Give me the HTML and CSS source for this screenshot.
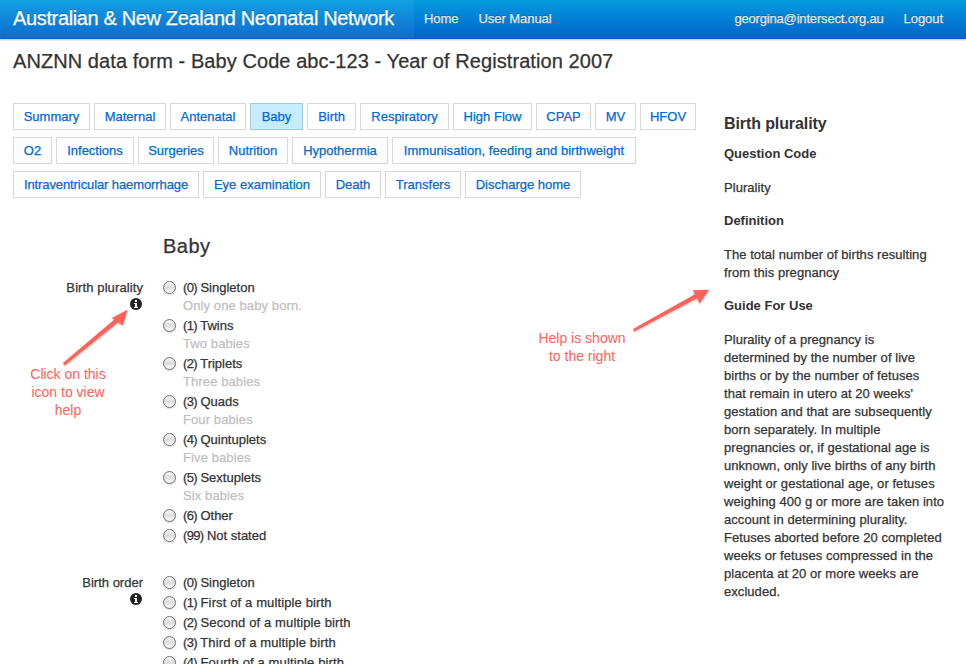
FILE: index.html
```
<!DOCTYPE html>
<html lang="en">
<head>
<meta charset="utf-8">
<title>ANZNN data form</title>
<link rel="stylesheet" href="styles.css">
</head>
<body>
<header class="navbar">
  <a class="brand">Australian &amp; New Zealand Neonatal Network</a>
  <nav class="nav"><a>Home</a><a>User Manual</a></nav>
  <nav class="nav nav-right"><a class="email">georgina@intersect.org.au</a><a>Logout</a></nav>
</header>
<h1 class="page-title">ANZNN data form - Baby Code abc-123 - Year of Registration 2007</h1>
<div class="columns">
  <main class="main">
    <div class="tabs">
      <div class="tab-row"><a style="width:77px">Summary</a><a style="width:72px">Maternal</a><a style="width:76px">Antenatal</a><a class="active" style="width:53px">Baby</a><a style="width:49px">Birth</a><a style="width:89px">Respiratory</a><a style="width:79px">High Flow</a><a style="width:55px">CPAP</a><a style="width:41px">MV</a><a style="width:56px">HFOV</a></div>
      <div class="tab-row"><a style="width:39px">O2</a><a style="width:78px">Infections</a><a style="width:76px">Surgeries</a><a style="width:70px">Nutrition</a><a style="width:96px">Hypothermia</a><a class="wide" style="width:244px">Immunisation, feeding and birthweight</a></div>
      <div class="tab-row"><a class="narrow" style="width:186px">Intraventricular haemorrhage</a><a style="width:118px">Eye examination</a><a style="width:56px">Death</a><a style="width:76px">Transfers</a><a style="width:116px">Discharge home</a></div>
    </div>
    <h2 class="section-title">Baby</h2>
    <section class="question">
      <div class="label"><span class="plurality">Birth plurality</span>
        <svg class="info" viewBox="0 0 12 12"><circle cx="6" cy="6" r="6"/><path d="M5 2h2v2H5zM4 5h3v4h1v1H4V9h1V6H4z"/></svg>
      </div>
      <div class="options">
        <label class="option"><i class="radio"></i><span><b>(0)</b> Singleton</span><small>Only one baby born.</small></label>
        <label class="option"><i class="radio"></i><span><b>(1)</b> Twins</span><small>Two babies</small></label>
        <label class="option"><i class="radio"></i><span><b>(2)</b> Triplets</span><small>Three babies</small></label>
        <label class="option"><i class="radio"></i><span><b>(3)</b> Quads</span><small>Four babies</small></label>
        <label class="option"><i class="radio"></i><span><b>(4)</b> Quintuplets</span><small>Five babies</small></label>
        <label class="option"><i class="radio"></i><span><b>(5)</b> Sextuplets</span><small>Six babies</small></label>
        <label class="option"><i class="radio"></i><span><b>(6)</b> Other</span></label>
        <label class="option"><i class="radio"></i><span><b>(99)</b> Not stated</span></label>
      </div>
    </section>
    <section class="question order">
      <div class="label"><span>Birth order</span>
        <svg class="info" viewBox="0 0 12 12"><circle cx="6" cy="6" r="6"/><path d="M5 2h2v2H5zM4 5h3v4h1v1H4V9h1V6H4z"/></svg>
      </div>
      <div class="options">
        <label class="option"><i class="radio"></i><span><b>(0)</b> Singleton</span></label>
        <label class="option"><i class="radio"></i><span><b>(1)</b> First of a multiple birth</span></label>
        <label class="option"><i class="radio"></i><span><b>(2)</b> Second of a multiple birth</span></label>
        <label class="option"><i class="radio"></i><span><b>(3)</b> Third of a multiple birth</span></label>
        <label class="option"><i class="radio"></i><span><b>(4)</b> Fourth of a multiple birth</span></label>
      </div>
    </section>
  </main>
  <aside class="help">
    <h3>Birth plurality</h3>
    <h4>Question Code</h4>
    <p>Plurality</p>
    <h4>Definition</h4>
    <p>The total number of births resulting<br>from this pregnancy</p>
    <h4>Guide For Use</h4>
    <p>Plurality of a pregnancy is<br>determined by the number of live<br>births or by the number of fetuses<br>that remain in utero at 20 weeks'<br>gestation and that are subsequently<br>born separately. In multiple<br>pregnancies or, if gestational age is<br>unknown, only live births of any birth<br>weight or gestational age, or fetuses<br>weighing 400 g or more are taken into<br>account in determining plurality.<br>Fetuses aborted before 20 completed<br>weeks or fetuses compressed in the<br>placenta at 20 or more weeks are<br>excluded.</p>
  </aside>
</div>
<svg class="arrows" viewBox="0 0 966 664">
  <g class="arrow"><path d="M63 363 115.5 318.5 118.5 322 64.8 365.5z"/><path d="M127.5 309.8 111.8 318 122.8 325.5z"/></g>
  <g class="arrow"><path d="M633 329 695.5 294 697.5 298 634.2 331.5z"/><path d="M709 289.8 692.8 290.3 699.8 303.5z"/></g>
</svg>
<div class="note note-icon">Click on this<br>icon to view<br>help</div>
<div class="note note-help">Help is shown<br>to the right</div>
</body>
</html>
```
FILE: styles.css
```
* { box-sizing: border-box; }
body {
  position: relative;
  margin: 0;
  height: 664px;
  overflow: hidden;
  background: #fff;
  color: #333;
  font: 13px/18px "Liberation Sans", Arial, sans-serif;
  -webkit-text-stroke: .25px currentColor;
}
h1, h2, h3, h4, p { margin: 0; }
.navbar {
  display: flex;
  height: 39px;
  color: #e6e6e6;
  background: linear-gradient(#059be0, #0063cd);
  border-bottom: 1px solid #0058b5;
  box-shadow: 0 1px 2px rgba(0, 0, 0, .25);
  text-shadow: 0 -1px 0 rgba(0, 0, 0, .25);
}
.brand {
  width: 414px;
  padding-left: 13px;
  font-size: 20px;
  line-height: 36px;
  letter-spacing: -.36px;
  white-space: nowrap;
  color: #fff;
  background: rgba(255, 255, 255, .06);
}
.nav { display: flex; gap: 20px; padding-left: 10px; line-height: 38px; letter-spacing: -.05px; }
.nav-right { margin-left: auto; padding-right: 23px; }
.email { letter-spacing: -.17px; }
.page-title { padding-left: 13px; margin-top: 4px; font-size: 20px; line-height: 36px; font-weight: 400; letter-spacing: .07px; white-space: nowrap; }
.columns { display: flex; padding: 24px 0 0 13px; }
.main { width: 711px; flex: none; }
.tabs { display: grid; gap: 7px; }
.tab-row { display: flex; gap: 4px; }
.tab-row a {
  height: 27px;
  border: 1px solid #d8d8d8;
  line-height: 25px;
  text-align: center;
  white-space: nowrap;
  color: #0069d6;
}
.tab-row .active { background: #c6ecff; border-color: #a3c8d9; }
.tab-row .wide { letter-spacing: .04px; }
.tab-row .narrow { letter-spacing: -.1px; }
.section-title { margin: 30px 0 15px 150px; font-size: 20px; line-height: 36px; font-weight: 400; letter-spacing: .5px; }
.question { display: flex; gap: 20px; margin-bottom: 29px; }
.label { width: 130px; display: flex; flex-direction: column; align-items: flex-end; }
.plurality { letter-spacing: .1px; }
.info { width: 12px; height: 12px; margin: 1px 1px 0 0; fill: #222; }
.info path { fill: #fff; }
.options { display: grid; gap: 2px; }
.option { display: grid; grid-template-columns: 12px auto; column-gap: 8px; white-space: nowrap; align-items: start; }
.option b { font-weight: 400; letter-spacing: -.7px; }
.order .option + .option { letter-spacing: .13px; }
.option small { grid-column: 2; font-size: 13px; color: #bfbfbf; letter-spacing: .1px; }
.radio {
  width: 13px;
  height: 13px;
  margin-top: 2px;
  border: 1px solid #6e6e6e;
  border-radius: 50%;
  background: linear-gradient(#fafafa, #dcdcdc 50%, #fff);
  box-shadow: 0 1px 1px rgba(0, 0, 0, .15);
}
.help { padding-top: 11px; white-space: nowrap; letter-spacing: .05px; }
.help h3, .help h4 { -webkit-text-stroke: 0; }
.help h3 { font-size: 16px; line-height: 20px; margin-bottom: 11px; letter-spacing: -.1px; }
.help h4 { font-size: 13px; line-height: 18px; letter-spacing: 0; }
.help p { padding: 16px 0 15px; }
.arrows { position: absolute; left: 0; top: 0; width: 966px; height: 664px; pointer-events: none; }
.arrow { fill: #ff6259; filter: drop-shadow(0 1px 1px rgba(0, 0, 0, .25)); }
.note { position: absolute; text-align: center; font-size: 14px; line-height: 18px; color: #ff6259; white-space: nowrap; -webkit-text-stroke: 0; }
.note-icon { left: 18px; top: 365px; width: 100px; }
.note-help { left: 532px; top: 329px; width: 100px; }
```
